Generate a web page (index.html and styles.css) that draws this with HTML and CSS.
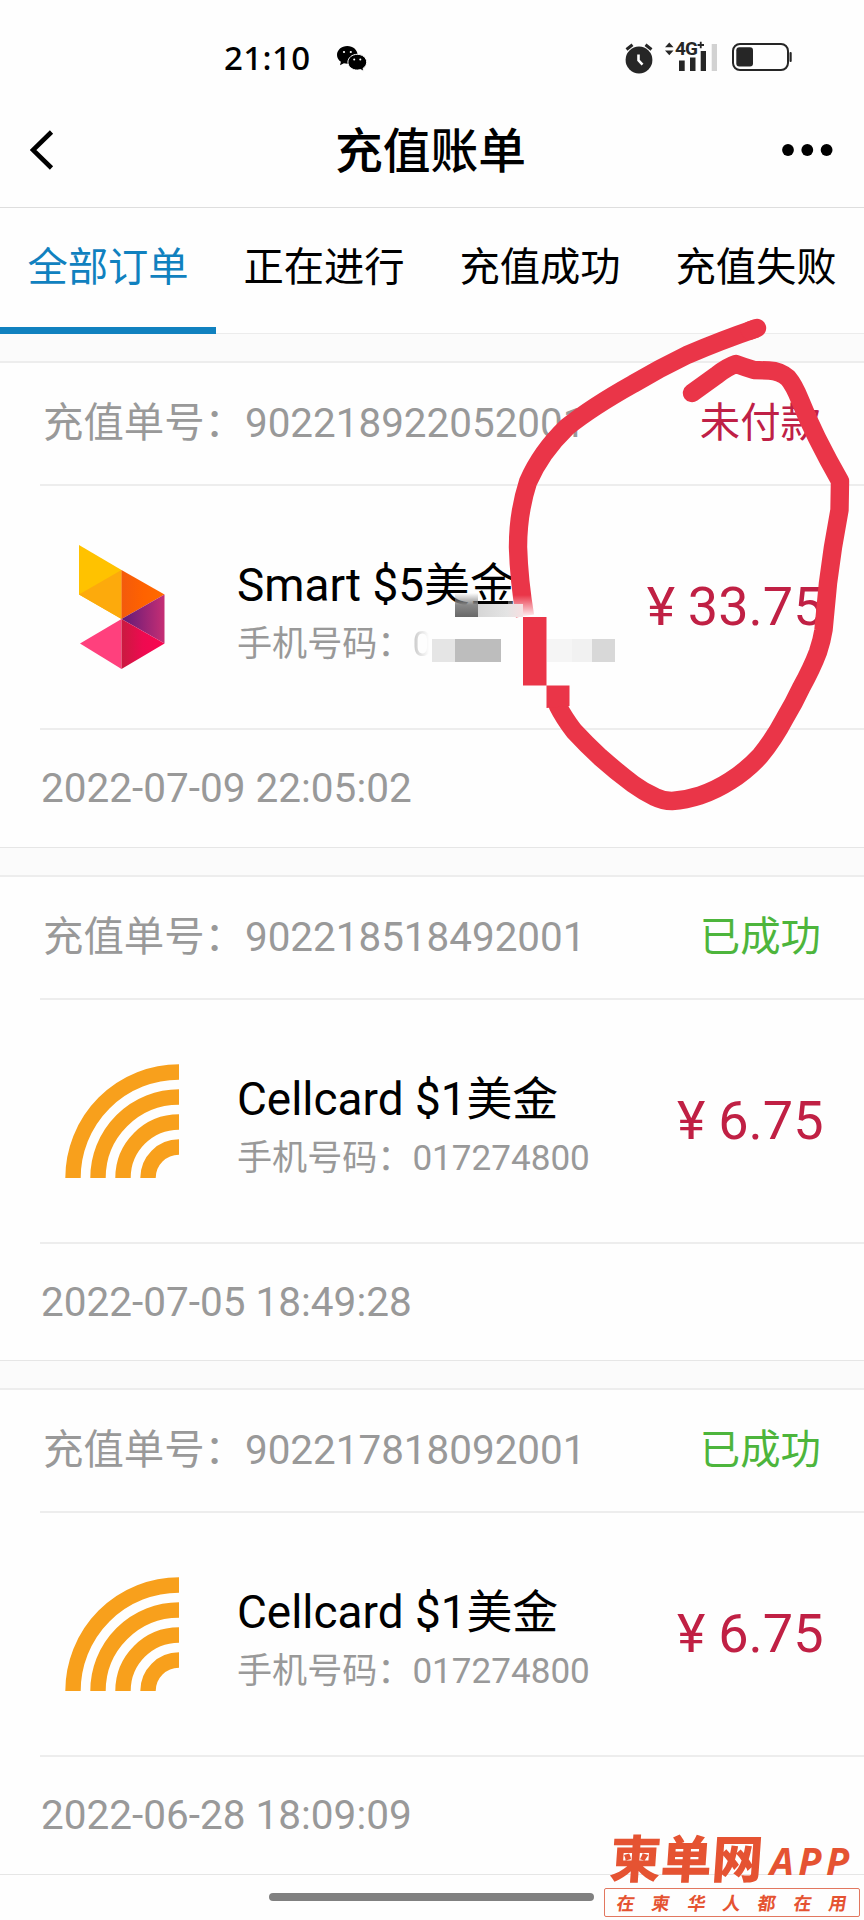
FILE: index.html
```html
<!DOCTYPE html>
<html lang="zh-CN">
<head>
<meta charset="utf-8">
<title>充值账单</title>
<link rel="stylesheet" href="styles.css">
</head>
<body>
<svg class="defs" aria-hidden="true">
  <defs>
    <linearGradient id="smart-orange" x1="0" y1="0" x2="1" y2="0"><stop offset="0" stop-color="#f35a0c"/><stop offset=".5" stop-color="#ff6200"/><stop offset="1" stop-color="#ff6a00"/></linearGradient>
    <linearGradient id="smart-purple" x1="0" y1="0" x2="1" y2="0"><stop offset="0" stop-color="#5f1a78"/><stop offset="1" stop-color="#c62e74"/></linearGradient>
    <linearGradient id="smart-red" x1="0" y1="0" x2="1" y2="0"><stop offset="0" stop-color="#c91a40"/><stop offset=".5" stop-color="#ee0a50"/><stop offset="1" stop-color="#fa0650"/></linearGradient>
    <symbol id="cellcard" viewBox="0 0 114 114">
      <g fill="none" stroke="#f8a01c" stroke-width="15.4">
        <path d="M8 114A106 106 0 0 1 114 8"/>
        <path d="M33 114A81 81 0 0 1 114 33"/>
        <path d="M58 114A56 56 0 0 1 114 58"/>
        <path d="M83 114A31 31 0 0 1 114 83"/>
      </g>
    </symbol>
  </defs>
</svg>
<div class="screen">
  <header class="status">
    <div class="status-left">
      <span class="clock">21:10</span>
      <svg class="wechat" viewBox="0 0 30 26">
        <path d="M10.3 0C4.6 0 0 4 0 8.900c0 2.800 1.500 5.200 3.900 6.900L3 19.300l3.900-2c1.100.3 2.200.5 3.400.5 5.700 0 10.300-4 10.300-8.900S16 0 10.300 0z"/>
        <path d="M20.300 8.300c-5.200 0-9.400 3.500-9.400 7.900s4.200 7.900 9.400 7.900c1.200 0 2.300-.2 3.300-.5l3.300 2-.9-3.200c2.200-1.400 3.700-3.700 3.700-6.200 0-4.400-4.200-7.900-9.400-7.900z" stroke="#fff" stroke-width="1"/>
        <g fill="#fff"><circle cx="7" cy="6" r="1.100"/><circle cx="13.800" cy="6" r="1.100"/><circle cx="17.200" cy="13.500" r="1"/><circle cx="23.300" cy="13.500" r="1"/></g>
      </svg>
    </div>
    <div class="status-right">
      <svg class="alarm" viewBox="0 0 30 32">
        <circle cx="15" cy="18" r="13.400"/>
        <path d="M2.500 7.500L8.500 2.800M27.500 7.500L21.500 2.800" stroke="#262626" stroke-width="3"/>
        <path d="M14.500 12.500v5.800l4 4.300" fill="none" stroke="#fff" stroke-width="2.600"/>
      </svg>
      <div class="signal">
        <svg class="bars" viewBox="0 0 54 32">
          <path d="M1 6.300L5.300 1.500 9.500 6.300zM1 9.500L5.300 14.200 9.500 9.500z"/>
          <path d="M15 19.500h5.700V30H15zM26 16.500h5.500V30H26zM36.700 10H42v20h-5.300z"/>
          <path d="M47.700 3H53v27h-5.300z" fill="#d2d2d2"/>
          <path d="M33.500 4h6.500M36.750 .8v6.500" stroke="#262626" stroke-width="1.800"/>
        </svg>
        <span class="network">4G</span>
      </div>
      <svg class="battery" viewBox="0 0 61 30">
        <rect x="2" y="2" width="55" height="26" rx="7" fill="none" stroke="#262626" stroke-width="2"/>
        <rect x="5.300" y="5.200" width="16.700" height="19.300" rx="3"/>
        <rect x="58.500" y="10" width="2.200" height="10" rx="1"/>
      </svg>
    </div>
  </header>
  <nav class="navbar">
    <svg class="back" viewBox="0 0 24 42"><path d="M21.500 3L3 21l18.500 18" fill="none" stroke="#000" stroke-width="4.600"/></svg>
    <h1>充值账单</h1>
    <svg class="more" viewBox="0 0 51 12"><circle cx="6" cy="6" r="5.900"/><circle cx="25.300" cy="6" r="5.900"/><circle cx="44.600" cy="6" r="5.900"/></svg>
  </nav>
  <div class="tabs">
    <div class="tab active">全部订单</div>
    <div class="tab">正在进行</div>
    <div class="tab">充值成功</div>
    <div class="tab">充值失败</div>
  </div>
  <main>
    <section class="order">
      <div class="order-head"><span>充值单号：902218922052001</span><span class="unpaid">未付款</span></div>
      <div class="order-body">
        <div class="logo">
          <svg class="smart" viewBox="0 0 86 125">
            <path d="M0 0L42.500 25v49L0 49.500z" fill="#ffc200"/>
            <path d="M0 49.500L42.500 25v49z" fill="#fdaa0c"/>
            <path d="M42.500 25L85.500 49.500 42.500 74z" fill="url(#smart-orange)"/>
            <path d="M85.500 49.500v49L42.500 74z" fill="url(#smart-purple)"/>
            <path d="M42.500 74v50L1 98.500z" fill="#ff407d"/>
            <path d="M42.500 74l43 24.500-43 25.500z" fill="url(#smart-red)"/>
          </svg>
        </div>
        <div class="info"><div class="name">Smart $5美金</div><div class="phone">手机号码：<span class="masked">0</span></div></div>
        <div class="price"><span class="yen">¥</span>33.75</div>
      </div>
      <div class="order-date">2022-07-09 22:05:02</div>
    </section>
    <section class="order">
      <div class="order-head"><span>充值单号：902218518492001</span><span class="done">已成功</span></div>
      <div class="order-body">
        <div class="logo"><svg class="cellcard"><use href="#cellcard"/></svg></div>
        <div class="info"><div class="name">Cellcard $1美金</div><div class="phone">手机号码：017274800</div></div>
        <div class="price"><span class="yen">¥</span>6.75</div>
      </div>
      <div class="order-date">2022-07-05 18:49:28</div>
    </section>
    <section class="order">
      <div class="order-head"><span>充值单号：902217818092001</span><span class="done">已成功</span></div>
      <div class="order-body">
        <div class="logo"><svg class="cellcard"><use href="#cellcard"/></svg></div>
        <div class="info"><div class="name">Cellcard $1美金</div><div class="phone">手机号码：017274800</div></div>
        <div class="price"><span class="yen">¥</span>6.75</div>
      </div>
      <div class="order-date">2022-06-28 18:09:09</div>
    </section>
  </main>
  <div class="home-bar"></div>

  <!-- hand-drawn marker loop and pixelated patch -->
  <svg class="marker" viewBox="0 0 864 1920">
    <defs>
      <linearGradient id="fade" x1="0" y1="0" x2="0" y2="1"><stop offset="0" stop-color="#fff" stop-opacity="0"/><stop offset="1" stop-color="#fff" stop-opacity=".95"/></linearGradient>
      <linearGradient id="dark" x1="0" y1="0" x2="0" y2="1"><stop offset="0" stop-color="#888" stop-opacity="0"/><stop offset=".5" stop-color="#888"/><stop offset="1" stop-color="#686868"/></linearGradient>
      <linearGradient id="light" x1="0" y1="0" x2="1" y2="0"><stop offset="0" stop-color="#d6d6d6"/><stop offset=".65" stop-color="#e4e4e4"/><stop offset="1" stop-color="#f7dfe1"/></linearGradient>
    </defs>
    <g fill="none" stroke="#ea3548" stroke-width="18.400" stroke-linecap="round" stroke-linejoin="round">
      <path stroke-linecap="butt" d="M756 328.500Q722 340 687 355Q660 368 633 384Q592 407 567 427Q541 452 528 482Q518 513 518 547Q519 580 525 616"/>
      <path d="M757 328L750 330.500"/>
      <path d="M558 706Q564 718 574 731Q586 744 600 757Q617 772 633 784Q644 792 655 797Q663 801 672 801Q686 800 700 795.500Q716 790 730 781Q746 771 760 756Q774 739 785 718Q794 703 801 688Q812 668 818 652Q822 640 823.500 630L828 583L833 547L839.500 510L840 481Q828 460 817 438Q808 420 800 400Q794 385 788 378Q780 371 769 370.500L754 370Q744 367 736 364Q727 367 717 375L692 393"/>
    </g>
    <rect x="508" y="595" width="34" height="22" fill="url(#fade)"/>
    <rect x="455" y="593" width="23" height="24" fill="url(#dark)"/>
    <rect x="478" y="604" width="45" height="13" fill="url(#light)"/>
    <path d="M523 617h23.500v68.500h23V706l-23 2v-22.500H523z" fill="#ea3548"/>
    <rect x="432" y="639" width="23" height="23" fill="#e5e5e5"/>
    <rect x="455" y="639" width="46" height="23" fill="#bdbdbd"/>
    <rect x="547" y="639" width="25" height="23" fill="#f5f5f5"/>
    <rect x="572" y="639" width="20" height="23" fill="#f1f1f1"/>
    <rect x="592" y="639" width="23" height="23" fill="#d8d8d8"/>
  </svg>

  <div class="watermark">
    <div class="brand"><span class="brand-cn">柬单网</span><span class="brand-app">APP</span></div>
    <div class="slogan"><span>在</span><span>柬</span><span>华</span><span>人</span><span>都</span><span>在</span><span>用</span></div>
  </div>
</div>
</body>
</html>
```

FILE: styles.css
```css
* { box-sizing: border-box; }
body {
  margin: 0;
  background: #fefefe;
  font-family: Roboto, "Noto Sans CJK SC", sans-serif;
  color: #000;
}
svg { display: block; flex: none; }
.defs { position: absolute; width: 0; height: 0; }
.screen { position: relative; width: 864px; height: 1920px; overflow: hidden; }

.status {
  display: flex;
  justify-content: space-between;
  height: 92px;
  padding: 41px 72px 0 224px;
}
.status-left, .status-right { display: flex; align-items: flex-start; }
.clock { font: 500 33px/33px "Noto Sans", sans-serif; width: 113px; letter-spacing: .4px; }
.wechat { width: 30px; height: 26px; margin-top: 5px; }
.status-right { fill: #262626; color: #262626; padding-top: 1px; }
.alarm { width: 30px; height: 32px; margin-right: 10px; }
.signal { display: grid; width: 54px; margin-right: 13px; }
.signal > * { grid-area: 1 / 1; }
.bars { width: 54px; height: 32px; margin-top: -1px; }
.network { font: 700 19px/14px Roboto, sans-serif; padding: 0 0 0 11px; letter-spacing: -1px; }
.battery { width: 61px; height: 30px; }

.navbar {
  display: flex;
  align-items: center;
  justify-content: space-between;
  height: 116px;
  padding: 0 31px 0 30px;
  border-bottom: 1px solid #dedede;
}
.back { width: 24px; height: 42px; }
.navbar h1 { margin: 5px 0 0 25px; font-size: 47.800px; font-weight: 500; line-height: 60px; }
.more { width: 51px; height: 12px; }

.tabs { display: grid; grid-template-columns: repeat(4, 216px); height: 126px; border-bottom: 1px solid #ececec; }
.tab { height: 126px; font-size: 40.300px; line-height: 120px; text-align: center; border-bottom: 7px solid transparent; }
.tab.active { color: #1081bf; border-color: #1081bf; }

main { background: #fbfbfb; padding-top: 27px; }
.order {
  height: 486.500px;
  margin-bottom: 27px;
  background: #fefefe;
  border-top: 2px solid #ededed;
  border-bottom: 1px solid #e6e6e6;
}
.order-head {
  display: flex;
  justify-content: space-between;
  height: 123px;
  margin-left: 40px;
  padding: 0 43px 0 3px;
  border-bottom: 2px solid #ededed;
  font-size: 40.400px;
  line-height: 121px;
  color: #999;
}
.unpaid { color: #bf2046; }
.done { color: #4db53c; }
.order-body {
  display: flex;
  align-items: center;
  height: 244px;
  margin-left: 40px;
  padding-right: 40.500px;
  border-bottom: 2px solid #ededed;
}
.logo { display: flex; justify-content: center; width: 163px; margin-right: 34px; }
.smart { width: 86px; height: 125px; }
.cellcard { width: 114px; height: 114px; }
.info { flex: 1; padding-top: 14px; }
.name { font-size: 45.900px; line-height: 60px; white-space: nowrap; }
.phone { font-size: 35.100px; line-height: 58px; color: #999; white-space: nowrap; }
.masked {
  background: linear-gradient(90deg, #c4c4c4, #fefefe 85%);
  background-clip: text;
  -webkit-background-clip: text;
  color: transparent;
}
.price { font-size: 54px; line-height: 64px; color: #c02044; white-space: nowrap; }
.yen { display: inline-block; width: 54px; text-align: center; }
.order-date { padding-left: 41px; font-size: 40.500px; line-height: 116px; color: #999; }

.home-bar { position: absolute; left: 269px; top: 1893px; width: 325px; height: 8px; border-radius: 4px; background: #808080; }
.marker { position: absolute; inset: 0; width: 864px; height: 1920px; }

.watermark { position: absolute; left: 604px; top: 1830px; width: 256px; color: #e55332; }
.brand { display: flex; height: 58px; padding-left: 6px; }
.brand-cn { width: 160px; font: 900 51px/52px "Noto Sans CJK SC", sans-serif; transform: skewX(-4deg); }
.brand-app { font: italic 700 38px/60px "Noto Sans", sans-serif; letter-spacing: 4.500px; }
.slogan {
  display: flex;
  justify-content: space-between;
  height: 29px;
  padding: 0 12px;
  border: 1px solid #e2775f;
  border-radius: 2px;
  background: #fefefe;
  font: 700 18px/27px "Noto Sans CJK SC", sans-serif;
}
.slogan span { transform: skewX(-9deg); }
```
